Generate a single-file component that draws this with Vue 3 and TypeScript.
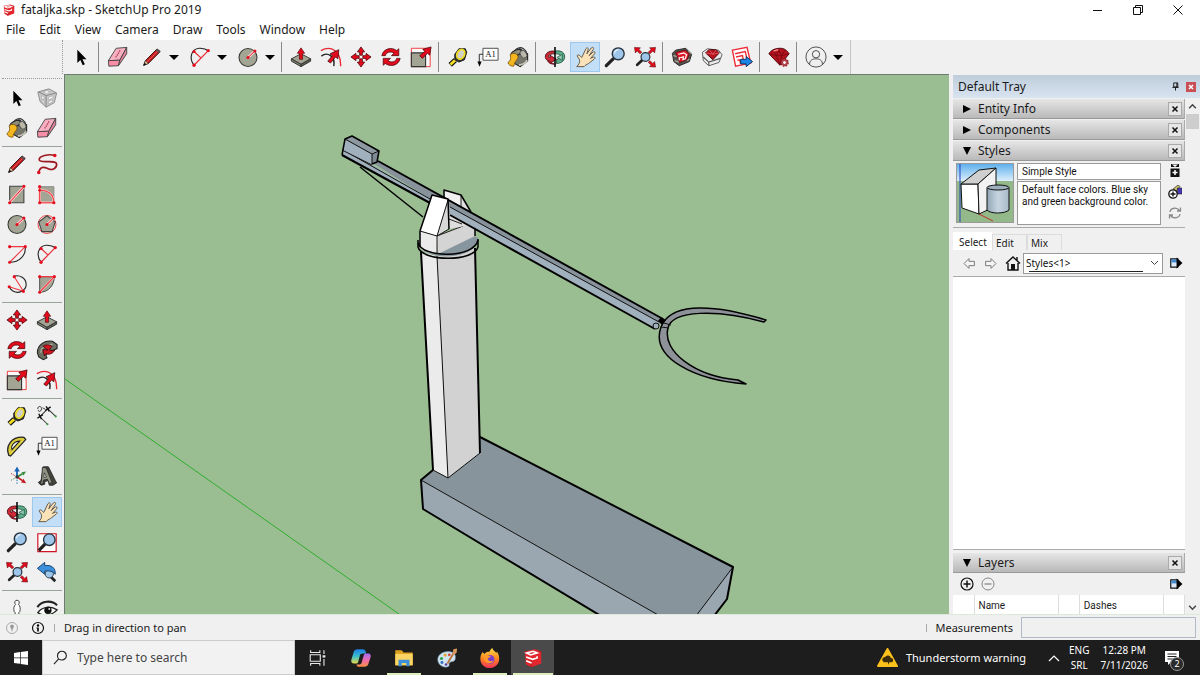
<script setup lang="ts">
import { ref } from 'vue'

interface Tool { icon: string; label: string; menu?: boolean }

const menus: string[] = ['File', 'Edit', 'View', 'Camera', 'Draw', 'Tools', 'Window', 'Help']

const toolbar: Tool[][] = [
  [{ icon: 'select', label: 'Select' }],
  [
    { icon: 'eraser', label: 'Eraser' },
    { icon: 'pencil', label: 'Line', menu: true },
    { icon: 'arc', label: '2 Point Arc', menu: true },
    { icon: 'circle', label: 'Circle', menu: true },
  ],
  [
    { icon: 'pushpull', label: 'Push/Pull' },
    { icon: 'offset', label: 'Offset' },
    { icon: 'move', label: 'Move' },
    { icon: 'rotate', label: 'Rotate' },
    { icon: 'scale', label: 'Scale' },
  ],
  [
    { icon: 'tape', label: 'Tape Measure' },
    { icon: 'text', label: 'Text' },
    { icon: 'paint', label: 'Paint Bucket' },
  ],
  [
    { icon: 'orbit', label: 'Orbit' },
    { icon: 'pan', label: 'Pan' },
    { icon: 'zoom', label: 'Zoom' },
    { icon: 'extents', label: 'Zoom Extents' },
  ],
  [
    { icon: 'warehouse', label: '3D Warehouse' },
    { icon: 'extwarehouse', label: 'Extension Warehouse' },
    { icon: 'layout', label: 'Send to LayOut' },
  ],
  [{ icon: 'extmanager', label: 'Extension Manager' }],
  [{ icon: 'user', label: 'Sign In', menu: true }],
]

const toolbox: Tool[][] = [
  [
    { icon: 'select', label: 'Select' }, { icon: 'component', label: 'Make Component' },
    { icon: 'paint', label: 'Paint Bucket' }, { icon: 'eraser', label: 'Eraser' },
  ],
  [
    { icon: 'pencil', label: 'Line' }, { icon: 'freehand', label: 'Freehand' },
    { icon: 'rect', label: 'Rectangle' }, { icon: 'rotrect', label: 'Rotated Rectangle' },
    { icon: 'circle', label: 'Circle' }, { icon: 'polygon', label: 'Polygon' },
    { icon: 'arc1', label: 'Arc' }, { icon: 'arc', label: '2 Point Arc' },
    { icon: 'arc3', label: '3 Point Arc' }, { icon: 'pie', label: 'Pie' },
  ],
  [
    { icon: 'move', label: 'Move' }, { icon: 'pushpull', label: 'Push/Pull' },
    { icon: 'rotate', label: 'Rotate' }, { icon: 'follow', label: 'Follow Me' },
    { icon: 'scale', label: 'Scale' }, { icon: 'offset', label: 'Offset' },
  ],
  [
    { icon: 'tape', label: 'Tape Measure' }, { icon: 'dimension', label: 'Dimensions' },
    { icon: 'protractor', label: 'Protractor' }, { icon: 'text', label: 'Text' },
    { icon: 'axes', label: 'Axes' }, { icon: 'text3d', label: '3D Text' },
  ],
  [
    { icon: 'orbit', label: 'Orbit' }, { icon: 'pan', label: 'Pan' },
    { icon: 'zoom', label: 'Zoom' }, { icon: 'zoomwindow', label: 'Zoom Window' },
    { icon: 'extents', label: 'Zoom Extents' }, { icon: 'previous', label: 'Previous' },
  ],
  [{ icon: 'camera', label: 'Position Camera' }, { icon: 'eye', label: 'Look Around' }],
]

const activeTool = ref('pan')
const styleName = ref('Simple Style')
const styleNote = ref('Default face colors. Blue sky and green background color.')
const tabs: string[] = ['Select', 'Edit', 'Mix']
const activeTab = ref('Select')

const apps = [
  { icon: 'taskview', label: 'Task View', open: false, active: false },
  { icon: 'copilot', label: 'Copilot', open: false, active: false },
  { icon: 'explorer', label: 'File Explorer', open: true, active: false },
  { icon: 'palette', label: 'Paint', open: false, active: false },
  { icon: 'firefox', label: 'Firefox', open: true, active: false },
  { icon: 'sketchup', label: 'SketchUp', open: true, active: true },
]
</script>

<template>
  <div class="desktop">
    <svg class="sprite" aria-hidden="true">
      <defs>
        <linearGradient id="g-fox" x1="0" y1="0" x2="0" y2="1">
          <stop offset="0" stop-color="#ffe04a" /><stop offset=".5" stop-color="#ff8a1f" /><stop offset="1" stop-color="#f0325a" />
        </linearGradient>
        <linearGradient id="g-cop1" x1="0" y1="0" x2="0" y2="1">
          <stop offset="0" stop-color="#1c7fe8" /><stop offset=".5" stop-color="#3bc0c8" /><stop offset="1" stop-color="#e8d84a" />
        </linearGradient>
        <linearGradient id="g-cop2" x1="0" y1="0" x2="0" y2="1">
          <stop offset="0" stop-color="#a06cf0" /><stop offset=".5" stop-color="#f06ab0" /><stop offset="1" stop-color="#f7903f" />
        </linearGradient>
        <linearGradient id="g-sky" x1="0" y1="0" x2="0" y2="1">
          <stop offset="0" stop-color="#5fb0ee" /><stop offset="1" stop-color="#e4f2fb" />
        </linearGradient>
        <linearGradient id="g-cyl" x1="0" y1="0" x2="1" y2="0">
          <stop offset="0" stop-color="#93a6b5" /><stop offset=".5" stop-color="#c6d4df" /><stop offset="1" stop-color="#a9bac7" />
        </linearGradient>
      </defs>

      <symbol id="i-select" viewBox="0 0 24 24">
        <path d="M8 4v14.500l3.300-3.200 2.600 5.600 2.300-1.100-2.600-5.400h4.400z" fill="#000" />
      </symbol>
      <symbol id="i-eraser" viewBox="0 0 24 24">
        <path d="M1.500 16 10 2.500 21.500 1.500 14 15.500z" fill="#f7b0c0" stroke="#444" />
        <path d="M1.500 16 14 15.500 12.500 21.500 2 22z" fill="#f78da6" stroke="#444" />
        <path d="M14 15.500 21.500 1.500v7L12.500 21.500z" fill="#e2839a" stroke="#444" />
        <path d="M9.500 12.500 14.500 4.500" stroke="#b1405e" stroke-width="1.500" stroke-dasharray="1.500 1" />
      </symbol>
      <symbol id="i-pencil" viewBox="0 0 24 24">
        <path d="M3 21 4.800 16 17.500 3.200 21 6 8 19z" fill="#c4161c" stroke="#2b1010" />
        <path d="M3 21 4.800 16 8 19z" fill="#f1cf9a" stroke="#333" stroke-width=".7" />
        <path d="M2.500 21.500 4 18.200 6 20.200z" fill="#111" />
        <path d="M17.500 3.200 21 6 19.300 7.700 15.900 4.900z" fill="#555" />
        <path d="M6.500 17.400 17.800 6" stroke="#ee6a5b" />
      </symbol>
      <symbol id="i-arc" viewBox="0 0 24 24">
        <path d="M5.500 21C-.5 13 2.500 3.500 11 2.500c4.500-.3 8 1 10.500 3" fill="none" stroke="#222" stroke-width="1.200" />
        <path d="M5.500 21 21 5M5.500 6 13 13" fill="none" stroke="#e92a34" stroke-width="1.300" />
        <g fill="#e30b1c"><circle cx="5.500" cy="21" r="1.800" /><circle cx="21" cy="5" r="1.800" /><circle cx="5.500" cy="6" r="1.700" /></g>
      </symbol>
      <symbol id="i-circle" viewBox="0 0 24 24">
        <circle cx="12" cy="12.500" r="9.800" fill="#a3a594" stroke="#3c3c38" stroke-width="1.200" />
        <path d="M12 12.500 19 6" stroke="#ffd5d5" stroke-width="3" /><path d="M12 12.500 19 6" stroke="#e30b1c" />
        <circle cx="12" cy="12.500" r="1.700" fill="#e30b1c" /><circle cx="19.500" cy="5.500" r="1.700" fill="#e30b1c" />
      </symbol>
      <symbol id="i-pushpull" viewBox="0 0 24 24">
        <path d="M1.500 14 12 8.500 22.500 14 12 20z" fill="#a3a594" stroke="#333" />
        <path d="M1.500 14v2.500L12 22.500V20z" fill="#7d7f70" stroke="#333" /><path d="M22.500 14v2.500L12 22.500V20z" fill="#5c5e52" stroke="#333" />
        <path d="M12 2 16 8h-2.300v6.500h-3.400V8H8z" fill="#e30b1c" stroke="#5a0508" stroke-width=".7" />
      </symbol>
      <symbol id="i-offset" viewBox="0 0 24 24">
        <path d="M1 5C12-1 23 5 22.500 22" fill="none" stroke="#e92a34" stroke-width="1.500" />
        <path d="M1.500 11C8 6 17 11 15 22" fill="none" stroke="#222" stroke-width="1.500" />
        <path d="M8.500 16.500 13.500 10.500 11 8.500 20.500 4 19.500 14 17 12 11.500 18.500z" fill="#e30b1c" stroke="#3a0508" stroke-width=".8" />
      </symbol>
      <symbol id="i-move" viewBox="0 0 24 24">
        <g fill="#e30b1c" stroke="#45060a" stroke-width=".8">
          <path d="M12 1 16 6.500h-2.500V10h-3V6.500H8z" /><path d="M12 23 8 17.500h2.500V14h3v3.500H16z" />
          <path d="M1 12 6.500 8v2.500H10v3H6.500V16z" /><path d="M23 12 17.500 16v-2.500H14v-3h3.500V8z" />
        </g>
      </symbol>
      <symbol id="i-rotate" viewBox="0 0 24 24">
        <g fill="#e30b1c" stroke="#45060a" stroke-width=".8">
          <path d="M2 10.500C3.500 2.500 13 .8 18.200 5L20.500 3v7.500h-8l2.800-2.700C11.500 5.500 7 6.500 5.800 10.500z" />
          <path d="M22 13.500c-1.500 8-11 9.700-16.200 5.500L3.500 21v-7.500h8l-2.800 2.700c3.800 2.300 8.300 1.300 9.500-2.700z" />
        </g>
      </symbol>
      <symbol id="i-scale" viewBox="0 0 24 24">
        <path d="M1.500 2.500H22v20H1.500z" fill="#fff" fill-opacity=".6" stroke="#e33" /><path d="M1.500 7.500h15.500v15H1.500z" fill="#a3a594" stroke="#333" stroke-width="1.200" />
        <path d="M10.500 10.500 16 6 14 3.500 23 1 21.500 10 19 8 13.500 13.500z" fill="#e30b1c" stroke="#45060a" stroke-width=".8" />
      </symbol>
      <symbol id="i-tape" viewBox="0 0 24 24">
        <path d="M9 15.500 3.500 20.500" stroke="#111" stroke-width="5.500" /><path d="M9.500 15 3.800 20.200" stroke="#f4df20" stroke-width="3" />
        <path d="M8.500 9 13 3h7l1.500 4-2.500 8-6 2.500-4.500-2.500z" fill="#333" stroke="#111" />
        <ellipse cx="15" cy="9" rx="4" ry="5.500" transform="rotate(28 15 9)" fill="#cfd0c8" stroke="#eedb22" stroke-width="2" />
      </symbol>
      <symbol id="i-text" viewBox="0 0 24 24">
        <path d="M6.500 2.500h16.500v13H6.500z" fill="#fff" stroke="#444" />
        <text x="9" y="12.300" font-family="Liberation Serif, serif" font-size="9.500" fill="#111">A1</text>
        <path d="M6.500 9H2.500v9" fill="none" stroke="#222" /><path d="M0.500 17h4.500l-2.300 5.500z" fill="#000" />
      </symbol>
      <symbol id="i-paint" viewBox="0 0 24 24">
        <path d="M5 10 14 3l8.500 5.500v7.500l-8 6.500-7.500-4z" fill="#74756b" stroke="#222" stroke-width="1.200" />
        <path d="M7.500 10C6 5 13-.5 18 3c4.500 3.500 4 7 2 9" fill="none" stroke="#333" stroke-width="1.200" />
        <ellipse cx="10" cy="7.500" rx="6" ry="3" transform="rotate(-25 10 7.500)" fill="#8e8c7c" stroke="#222" stroke-width="1.200" />
        <ellipse cx="18" cy="9" rx="3.200" ry="4.500" transform="rotate(-35 18 9)" fill="#b9b8aa" stroke="#444" stroke-width=".8" />
        <path d="M13 20.500c4 .5 8-3 9-5" fill="none" stroke="#c9c8ba" stroke-width="1.800" />
        <path d="M3.500 9.500C7 6.500 12.500 8.500 12 12.500c-1 3.500-3.500 3.500-4.500 9.500-3 .5-6-1.500-6.500-4 3-2 3.500-4 2.500-8.500z" fill="#f4b61e" stroke="#6d4a06" stroke-width=".8" />
      </symbol>
      <symbol id="i-orbit" viewBox="0 0 24 24">
        <path d="M12.500 5.500C19 4.500 23 7.500 22.500 12.500c-.5 4-4 6.500-9 6.500v-3.500c-1-.8 2.500-.5 5-4-1-2.500-3-3-6-3z" fill="#5fae8b" stroke="#184a36" stroke-width=".9" />
        <path d="M14 12.500 20 9v6.500z" fill="#8fc8ae" stroke="#184a36" stroke-width=".7" />
        <path d="M11.500 5.500C5 5 1 8 1.500 12.500c0 2 2 3.500 5 4V19l7-4.500-7-4.500v2.500C5 12.300 4.500 11.500 5 10.500c1-1.500 3-2 6.500-2z" fill="#cf2a38" stroke="#40060a" stroke-width=".9" />
        <path d="M4 16c2 3 5 4 9 3.500" fill="none" stroke="#7c1520" stroke-width="1.500" />
        <path d="M12 1v22" stroke="#111" stroke-width="1.800" />
      </symbol>
      <symbol id="i-pan" viewBox="0 0 24 24">
        <path d="M3 22.500c2.500-2.500 3.500-4.500 3-7.500L3.500 11c0-2 2.300-1.500 3.500.3l1.500 1.200L13 3c1-1.700 3-1 2.500.8L14 8.500l5-6.500c1.500-1.200 3.200 0 2 1.700L16.500 10.500l4.500-4c1.600-.9 2.600.8 1.500 2L18 13.500l3.500-1.500c1.500-.3 2 1.300.6 2.200L16 19c-2.500 1.500-4 2-5 3.500z" fill="#fbe3b9" stroke="#5c5142" stroke-width="1" />
      </symbol>
      <symbol id="i-zoom" viewBox="0 0 24 24">
        <path d="M2.500 21.500 10 14" stroke="#222" stroke-width="3.500" stroke-linecap="round" />
        <circle cx="15.500" cy="8.500" r="6.500" fill="#9ec5ea" stroke="#26323d" stroke-width="1.500" />
        <path d="M11.500 8c0-2 2-4 4.500-4" fill="none" stroke="#e2f0fb" stroke-width="1.500" />
      </symbol>
      <symbol id="i-extents" viewBox="0 0 24 24">
        <path d="M3.500 20.500 10 14.500" stroke="#222" stroke-width="3" stroke-linecap="round" /><circle cx="12.500" cy="12" r="4.800" fill="#9ec5ea" stroke="#26323d" stroke-width="1.300" />
        <g fill="#e30b1c" stroke="#55060a" stroke-width=".6">
          <path d="M.5 1.500 7 2 5.300 3.700 8.500 6.700 6.500 8.500 3.500 5.500 1.500 7.500z" /><path d="M23.500 1.500 17 2l1.700 1.700-3.200 3 2 1.800 3-3 2 2z" />
          <path d="M23.500 23 17 22.500l1.700-1.700-3.200-3 2-1.800 3 3 2-2z" />
        </g>
      </symbol>
      <symbol id="i-component" viewBox="0 0 24 24">
        <path d="M2 5.500 14 2l8.500 4.500L20 17l-9 5-6.500-6z" fill="#c9c9c9" stroke="#888" />
        <path d="M3 5.500 11 9.500 21.500 6.500M11 9.500V21.500" fill="none" stroke="#8a8a8a" stroke-width="1.200" />
        <path d="M6 9.500l3 1.700v2.500l-3-1.700zM6.500 14l2.500 1.700v2.500l-2.500-2.500zM13.500 11.500l5-2v2.500l-5 2zM13.500 16l4.500-2v2l-4.500 2.500zM8 5.500l4-1.500 3.500 2-4 1z" fill="#fff" stroke="#999" stroke-width=".6" />
      </symbol>
      <symbol id="i-freehand" viewBox="0 0 24 24">
        <path d="M20 2.500C14 1 3 3 3.500 7.500S22 6.500 22.500 12c.3 5-5 7-8.500 5.500S5 13 3 21" fill="none" stroke="#9d1820" stroke-width="1.800" />
        <circle cx="20.500" cy="2.800" r="1.900" fill="#e30b1c" /><circle cx="3" cy="21.300" r="1.900" fill="#e30b1c" />
      </symbol>
      <symbol id="i-rect" viewBox="0 0 24 24">
        <path d="M4 3.500h15.500v18H4z" fill="#a3a594" stroke="#444" stroke-width="1.200" /><path d="M4 21 19.500 4" stroke="#ffc6c6" stroke-width="3" /><path d="M4 21 19.500 4" stroke="#e30b1c" />
        <circle cx="4" cy="21.500" r="1.700" fill="#e30b1c" /><circle cx="19.500" cy="3.500" r="1.700" fill="#e30b1c" />
      </symbol>
      <symbol id="i-rotrect" viewBox="0 0 24 24">
        <path d="M4 4h15.500v17.500H4z" fill="#a3a594" stroke="#888" /><path d="M4 21.500V4M4 8c8-1 15.500 4 15.500 13.500H4" fill="none" stroke="#ffc6c6" stroke-width="2.500" /><path d="M4 21.500V4M4 8c8-1 15.500 4 15.500 13.500H4" fill="none" stroke="#ee3a42" stroke-width="1.200" />
        <g fill="#e30b1c"><circle cx="4" cy="4" r="1.700" /><circle cx="4" cy="8" r="1.500" /><circle cx="4" cy="21.500" r="1.700" /><circle cx="19.500" cy="21.500" r="1.700" /></g>
      </symbol>
      <symbol id="i-polygon" viewBox="0 0 24 24">
        <circle cx="12" cy="12.500" r="9.800" fill="none" stroke="#e33" /><path d="M12 3 21 9.800 17.600 20.300H6.400L3 9.800z" fill="#a3a594" stroke="#444" stroke-width="1.200" />
        <path d="M12 12.500 19 6" stroke="#ffd5d5" stroke-width="3" /><path d="M12 12.500 19 6" stroke="#e30b1c" />
        <circle cx="12" cy="12.500" r="1.700" fill="#e30b1c" /><circle cx="19.500" cy="5.500" r="1.700" fill="#e30b1c" />
      </symbol>
      <symbol id="i-arc1" viewBox="0 0 24 24">
        <path d="M21 4c1 9-6 17-17 17" fill="none" stroke="#222" stroke-width="1.200" /><path d="M4 4h17L4 21" fill="none" stroke="#ee3a42" stroke-width="1.200" />
        <g fill="#e30b1c"><circle cx="4" cy="4" r="1.700" /><circle cx="21" cy="4" r="1.700" /><circle cx="4" cy="21" r="1.700" /></g>
      </symbol>
      <symbol id="i-arc3" viewBox="0 0 24 24">
        <path d="M8 4c7-3 14 2 14 8.500S14 23 8 20c-3-1.500-4-4-4.500-5" fill="none" stroke="#222" stroke-width="1.200" /><path d="M9 4 19 20 3.500 15" fill="none" stroke="#ee3a42" stroke-width="1.200" />
        <g fill="#e30b1c"><circle cx="9" cy="4" r="1.700" /><circle cx="19" cy="20" r="1.700" /><circle cx="3.500" cy="15" r="1.700" /></g>
      </symbol>
      <symbol id="i-pie" viewBox="0 0 24 24">
        <path d="M4 4h16c0 9-6 17-16 17z" fill="#a3a594" stroke="#444" /><path d="M20 4 4 21" stroke="#ffc6c6" stroke-width="2.500" /><path d="M4 4h16L4 21" fill="none" stroke="#ee3a42" stroke-width="1.200" />
        <g fill="#e30b1c"><circle cx="4" cy="4" r="1.700" /><circle cx="20" cy="4" r="1.700" /><circle cx="4" cy="21" r="1.700" /></g>
      </symbol>
      <symbol id="i-follow" viewBox="0 0 24 24">
        <path d="M1.500 15C1.500 6 10 1 18 2.500L23 6v4.500l-5 2c-5-1-7 2-7 6l1 2-4 2-5-3z" fill="#6e7064" stroke="#222" stroke-width="1.200" />
        <path d="M5 15c1-6 6-9.500 13-9" fill="none" stroke="#a9ab9b" stroke-width="1.500" />
        <path d="M7.500 8C11 5.500 15 6 17.500 8l-3 4c2 1 4 .8 6 0-2 4.500-7 5.500-9.500 4L9 18.500 7.500 11.500 13 12z" fill="#d01420" stroke="#3a0508" stroke-width=".8" />
      </symbol>
      <symbol id="i-dimension" viewBox="0 0 24 24">
        <path d="M4 13 13 4M3.500 12l9 9M12 3.500l9.500 9" stroke="#333" stroke-width="1.100" />
        <path d="M1.500 14.500l6-4M10 6l6-4M3 9.500l3 6M11 1.500l3.500 5.500" stroke="#111" stroke-width="1.500" />
        <path d="M2 4.500C1.500 1 6 .5 6 4S2.500 8 2.500 5.500M7 3l3 1.500" fill="none" stroke="#333" />
        <circle cx="12.500" cy="21" r="1.200" fill="#3c9a42" /><circle cx="21.500" cy="12.500" r="1.200" fill="#3c9a42" />
      </symbol>
      <symbol id="i-protractor" viewBox="0 0 24 24">
        <path d="M3 22C-1 12 6 1.500 19.500 2.500l2 2.500L5 23z" fill="#d9c838" stroke="#222" stroke-width="1.400" />
        <path d="M6.500 16C5 11.500 9 6.500 15 6.500z" fill="#f0f0f0" stroke="#222" stroke-width="1.100" /><path d="M5 20 19.500 5" stroke="#fff59a" stroke-dasharray="1 1.500" />
      </symbol>
      <symbol id="i-axes" viewBox="0 0 24 24">
        <path d="M12 13V5" stroke="#1762b4" stroke-width="2" /><path d="M12 1.500 15 7H9z" fill="#1762b4" />
        <path d="M12 13l6-3.500" stroke="#348c3c" stroke-width="1.800" /><path d="M22 7l-3 4.500-2-3.500z" fill="#348c3c" />
        <path d="M12 13l6 4" stroke="#c41620" stroke-width="1.800" /><path d="M22 20l-5.500-1 2.500-4z" fill="#c41620" />
        <path d="M12 13v8" stroke="#1762b4" stroke-dasharray="1.500 1.500" /><path d="M12 13l-7-4" stroke="#c41620" stroke-dasharray="1.500 1.500" /><path d="M12 13l-7 4" stroke="#348c3c" stroke-dasharray="1.500 1.500" />
        <circle cx="12" cy="13" r="1.800" fill="#333" />
      </symbol>
      <symbol id="i-text3d" viewBox="0 0 24 24">
        <path d="M8 2h5.500l7.500 15 1.500 2.500-4 2.500h-4l-1-5-4 1v3l-4 1-3-3 3-2z" fill="#44463d" stroke="#222" />
        <path d="M7 2.500l4 .5L17.500 19l-3 1.500-2-5L8 16.500l-.5 4-3 .5L6 17z" fill="#8f9182" stroke="#222" stroke-width=".8" /><path d="M9 8.500l2.500 4.500-3 .5z" fill="#f0f0f0" stroke="#222" stroke-width=".8" />
      </symbol>
      <symbol id="i-zoomwindow" viewBox="0 0 24 24">
        <path d="M2 3h20v19.500H2z" fill="#fff" stroke="#d01425" stroke-width="1.300" /><path d="M3 21.500 10 14" stroke="#222" stroke-width="3.500" />
        <circle cx="14.500" cy="9.500" r="6.300" fill="#9ec5ea" stroke="#26323d" stroke-width="1.500" />
      </symbol>
      <symbol id="i-previous" viewBox="0 0 24 24">
        <path d="M14 15 21 22" stroke="#222" stroke-width="3" /><circle cx="14.500" cy="14" r="4.500" fill="#9ec5ea" stroke="#26323d" />
        <path d="M1.500 8 9.500 1.500V5c7-1 12 2 11.500 9.500-2.500-3.500-6-4-11.500-3.500V14.500z" fill="#3d8fdb" stroke="#123d68" />
      </symbol>
      <symbol id="i-camera" viewBox="0 0 24 24">
        <path d="M12 3.500a2.500 2.500 0 0 1 1.500 4.500c2 1.500 2.500 5 1.500 8l-1 1v6h-4v-6l-1-1c-1-3-.5-6.500 1.500-8A2.500 2.500 0 0 1 12 3.500z" fill="#fff" stroke="#333" />
      </symbol>
      <symbol id="i-eye" viewBox="0 0 24 24">
        <path d="M1.500 11C6 4 17 3 23 9" fill="none" stroke="#222" stroke-width="2.200" /><path d="M2 17c5-6.500 14-7.500 21-3-4 5-15 8-21 3z" fill="#fff" stroke="#222" stroke-width="1.500" /><circle cx="13" cy="14.500" r="4" fill="#111" /><circle cx="14.500" cy="13" r="1" fill="#fff" />
      </symbol>
      <symbol id="i-warehouse" viewBox="0 0 24 24">
        <path d="M1.500 8 5 4.500l11-2L22.500 9 20 17 9 21.500 3 17z" fill="#55524e" stroke="#222" />
        <path d="M2.500 10.500l4 1M19 5.500l3.500 3M4 16l5 1.500M20 14.500l-3 1.500" stroke="#aaa69f" stroke-width="1.500" />
        <path d="M5 7 15.500 4.500 20 8.500 17.500 15 9.500 18z" fill="#da1a28" stroke="#57090f" stroke-width=".8" />
        <path d="M8 9l6-1.500 3 2-1.500 4.500-2.500.8.500-3-3.500 1M9 12v3.500" fill="none" stroke="#fff" stroke-width="1.300" />
      </symbol>
      <symbol id="i-extwarehouse" viewBox="0 0 24 24">
        <path d="M1.500 7 7 3l12 1.500 4 5L19.500 18 8.500 21.500 2.500 16z" fill="#ececec" stroke="#555" />
        <path d="M2.500 12l6 5.500L21 13.500M8.500 17.500v4" fill="none" stroke="#555" stroke-width="1.200" />
        <path d="M5 7.500 8.500 4h8L20 7.500 13 15z" fill="#b5131f" stroke="#3a0508" stroke-width=".9" /><path d="M5 7.500l8 1.500 7-1.500M9 4l4 5 3.500-5" fill="none" stroke="#ee6d70" stroke-width=".7" />
      </symbol>
      <symbol id="i-layout" viewBox="0 0 24 24">
        <path d="M1.500 4.500 17.500 1.500l4 17L5 22z" fill="#fff" stroke="#ee2b36" stroke-width="1.500" /><path d="M4.500 8.500 15.500 6l2 8M5.500 12l7-1.500 1 5M7 15.500l2.500-.5 1 4.500" fill="none" stroke="#ee2b36" stroke-width="1.500" />
        <path d="M10.500 14.500h6V11.500l7 5.500-7 5.500v-3h-6z" fill="#1986e8" stroke="#0b3058" />
      </symbol>
      <symbol id="i-extmanager" viewBox="0 0 24 24">
        <path d="M1 8.500C3 5 6 3 12 2.500S21 5 23 8.500L13 21z" fill="#b3121d" stroke="#4a060a" /><path d="M1.500 8.500 9 10.500l6 0 8-2M6 4.500 9 10.500l4 10L15 10.500l3.500-6M9 10.500 12 5l3 5.500" fill="none" stroke="#740a12" stroke-width=".9" /><path d="M6 5.500l5-1.500" stroke="#ff8b8e" stroke-width="1.500" />
        <circle cx="18" cy="18" r="3.800" fill="#b5454c" /><circle cx="18" cy="18" r="1.500" fill="#fff" /><circle cx="18" cy="18" r="4" fill="none" stroke="#8f1c25" stroke-width="1.500" stroke-dasharray="1.800 1.300" />
      </symbol>
      <symbol id="i-user" viewBox="0 0 24 24">
        <g fill="none" stroke="#444"><circle cx="12" cy="12" r="11" /><circle cx="12" cy="9" r="4" /><path d="M5 20c0-4.500 3-6 7-6s7 1.500 7 6" /></g>
      </symbol>
      <symbol id="i-sketchup" viewBox="0 0 24 24">
        <path d="M3 5 14 2.500 21 5v13L10 22l-6-3.500 0-4z" fill="#e3262d" /><path d="M3 5l7 2.500L21 5M10 22v-9" fill="none" stroke="#a9141c" />
        <path d="M5 6.500l7-1.800 4.500 1.800-7 2zM4.500 11l7 2.500 5-1.500v-2M4.500 15l6 2.500" fill="none" stroke="#fff" stroke-width="1.800" />
      </symbol>
      <symbol id="i-taskview" viewBox="0 0 24 24">
        <path d="M4 3.500v2.500h10V3.500M4 20.500V18h10v2.500M3.500 8.500h11v7h-11zM18.500 3.500v4M18.500 13v7.500" fill="none" stroke="#e8e8e8" stroke-width="1.200" /><path d="M17 9h3v2.500h-3z" fill="#e8e8e8" />
      </symbol>
      <symbol id="i-copilot" viewBox="0 0 24 24">
        <path d="M8 2.500h6c2 0 2.500 1 3 2.500l.5 2-4 0c-2 0-2.500 1-3 3l-1.500 6c-.5 1.500-1 2-3 2H4c-2.500 0-3-2-2.500-4L4 5.500C4.700 3.500 6 2.500 8 2.500z" fill="url(#g-cop1)" />
        <path d="M16 21.500h-6c-2 0-2.500-1-3-2.500h3c2 0 2.500-1 3-3l2-7c.5-1.500 1-2 3-2h2c2.500 0 3 2 2.500 4L20 18.500c-.7 2-2 3-4 3z" fill="url(#g-cop2)" />
      </symbol>
      <symbol id="i-explorer" viewBox="0 0 24 24">
        <path d="M2.500 3.500h7l2 2.500h10v14h-19z" fill="#e0a11e" /><path d="M2.500 7.500h19v12.500h-19z" fill="#fcd463" /><path d="M6 21v-7h12v7h-3.500v-3.500h-5V21z" fill="#3c8fd8" />
      </symbol>
      <symbol id="i-palette" viewBox="0 0 24 24">
        <path d="M2 15C1 9 7 4.500 14 5c6 .5 8 4 7 8s-4 2-6 4 1 3-2 4.500S3 21 2 15z" fill="#cfe3f1" stroke="#6e93ad" stroke-width=".6" />
        <circle cx="6" cy="12.500" r="1.700" fill="#31a04a" /><circle cx="10" cy="8.800" r="1.700" fill="#e8a42c" /><circle cx="14.500" cy="8.500" r="1.500" fill="#d4453a" /><circle cx="6.500" cy="17" r="1.600" fill="#2f6fc0" /><circle cx="11" cy="19" r="1.400" fill="#5e3b9a" />
        <path d="M12.500 18 19 7" stroke="#b8763b" stroke-width="2" /><path d="M18 7.500l1-5 4-1-.5 4.500-3 3z" fill="#d69a5e" />
      </symbol>
      <symbol id="i-firefox" viewBox="0 0 24 24">
        <path d="M4 5.500c.5 1 1 1.500 2 2C8 5 10 5 11.500 5.200 12 3.500 13 2 14.500 1c.5 2.500 3 3.500 4.500 5.500l.5-1.500c2.500 3.500 3.500 8.500 1.500 12.500C19 21 15.500 23 12 23 5.500 23 1.500 18 1.500 13c0-3 1-5.500 2.500-7.500z" fill="url(#g-fox)" />
        <circle cx="12" cy="13.500" r="4.800" fill="#7a3fd0" /><path d="M5.500 10c3-2 6-1 8 1-2-.2-2.500 1-4 1.500 0 3 4 4 6.500 2-1 4-8 5-10.500-.5z" fill="#ff9a28" />
      </symbol>
      <symbol id="i-details" viewBox="0 0 24 24">
        <path d="M3 5h12v14H3z" fill="#dbe9f7" stroke="#111" stroke-width="2" /><path d="M4 6h10v5H4z" fill="#4389d0" /><path d="M13 2.500 23 12 13 21.500z" fill="#000" />
      </symbol>
      <symbol id="i-arrow" viewBox="0 0 24 24">
        <path d="M2 12 11 3v5h10v8H11v5z" fill="#f5f5f5" stroke="#777" stroke-width="1.800" />
      </symbol>
    </svg>

    <header class="titlebar">
      <svg class="logo" aria-hidden="true"><use href="#i-sketchup" /></svg>
      <h1>fataljka.skp - SketchUp Pro 2019</h1>
      <div class="window-buttons">
        <button type="button" aria-label="Minimize"><svg viewBox="0 0 12 12"><path d="M1 6.500h9" /></svg></button>
        <button type="button" aria-label="Restore"><svg viewBox="0 0 12 12"><path d="M1.500 3.500h7v7h-7zM3.500 3.500v-2h7v7h-2" /></svg></button>
        <button type="button" aria-label="Close"><svg viewBox="0 0 12 12"><path d="M1.500 1.500l9 9M10.500 1.500l-9 9" /></svg></button>
      </div>
    </header>

    <nav class="menubar">
      <button v-for="m in menus" :key="m" type="button">{{ m }}</button>
    </nav>

    <div class="toolbar" role="toolbar" aria-label="Getting Started">
      <div class="strip">
        <div v-for="(group, i) in toolbar" :key="i" class="group">
          <div v-for="t in group" :key="t.icon" class="slot" :class="{ pair: t.menu }">
            <button type="button" class="tool" :class="{ on: t.icon === activeTool }" :aria-label="t.label" @click="activeTool = t.icon">
              <svg aria-hidden="true"><use :href="'#i-' + t.icon" /></svg>
            </button>
            <button v-if="t.menu" type="button" class="caret" :aria-label="t.label + ' options'"></button>
          </div>
        </div>
      </div>
    </div>

    <div class="workspace">
      <div class="toolbox" role="toolbar" aria-label="Large Tool Set">
        <div v-for="(group, i) in toolbox" :key="i" class="box-group">
          <button v-for="t in group" :key="t.icon" type="button" class="tool" :class="{ on: t.icon === activeTool }" :aria-label="t.label" @click="activeTool = t.icon">
            <svg aria-hidden="true"><use :href="'#i-' + t.icon" /></svg>
          </button>
        </div>
      </div>

      <main class="viewport">
        <svg viewBox="65 75 884 539" preserveAspectRatio="xMinYMin slice" role="img" aria-label="3D model">
          <path d="M65 379 399 614" stroke="#2fae2f" />
          <g stroke-linejoin="round">
            <!-- base slab -->
            <path d="M433 470 480 437 733 567 697 616H660L421 480z" fill="#87949c" />
            <path d="M421 480 660 616H601L423 509z" fill="#9aa7b1" />
            <path d="M733 567 727 599 714 616H696z" fill="#9aa7b1" />
            <path d="M421 480 660 616M733 567 696 616" fill="none" stroke="#111" />
            <path d="M601 616 423 509 421 480 433 470M480 437 733 567 727 599 714 616" fill="none" stroke="#000" stroke-width="2" />
            <!-- column -->
            <path d="M421 252 437 256 448 478 433 470z" fill="#ebebeb" />
            <path d="M437 256 475 246 480 453 448 478z" fill="#d2d2d2" />
            <path d="M437 256 448 478M433 470 448 478 480 453" fill="none" stroke="#111" />
            <path d="M421 252 433 470M475 248 480 453" fill="none" stroke="#000" stroke-width="2" />
            <!-- collar -->
            <path d="M418 241C417 262 478 262 478 238L474 236 437 253z" fill="#87959e" />
            <path d="M420 231 437 236V254C430 254 423 251 420 248z" fill="#ebebeb" />
            <path d="M437 236 475 221V236L438 254z" fill="#d4d4d4" />
            <path d="M418 240v7c4 15 56 15 60 0v-8" fill="none" stroke="#000" stroke-width="1.500" />
            <path d="M418 243c4 15 56 16 60-3" fill="none" stroke="#000" stroke-width="1.500" />
            <path d="M420 231V247M475 222V236" fill="none" stroke="#000" stroke-width="1.500" /><path d="M437 236V254M437 236 463 226" stroke="#222" />
            <!-- rear bracket -->
            <path d="M444 190 461 195 471 212 475 224 449 229z" fill="#dedede" /><path d="M444 190 461 195V211L445 200z" fill="#f1f1f1" />
            <path d="M461 195V212M449 219 462 224M461 208 472 213" fill="none" stroke="#222" />
            <path d="M444 199V190L461 195 471 212" fill="none" stroke="#000" stroke-width="1.500" />
            <!-- beam -->
            <path d="M373 163 378 161 663 319 659 325 430 199z" fill="#87929a" />
            <path d="M342 155 346 150 373 165 430 199 450 207 659 322 655 329 430 203z" fill="#a1b0bd" />
            <path d="M345 151 430 199M450 207 659 322" stroke="#111" />
            <path d="M378 161 663 319M342 155 430 203M450 215 655 329" stroke="#000" stroke-width="2" />
            <path d="M360 167 423 217" stroke="#000" stroke-width="1.500" />
            <!-- counterweight -->
            <path d="M345 139 352 136 379 151 372 155z" fill="#8d98a0" /><path d="M345 139 372 154V164L342 151z" fill="#a1b0bd" /><path d="M372 154 379 151 377 162 372 164z" fill="#7f8a92" />
            <path d="M345 139 372 154V164M372 154 379 151M342 150 372 165" fill="none" stroke="#111" />
            <path d="M342 155 345 139 352 136 379 151 377 162 372 164" fill="none" stroke="#000" stroke-width="1.500" />
            <!-- front bracket -->
            <path d="M432 195 448 199 437 236 420 231z" fill="#fff" /><path d="M448 199 449 229 437 236z" fill="#d8d8d8" />
            <path d="M420 231 437 236 448 200M437 236 449 229" fill="none" stroke="#111" />
            <path d="M420 231 432 195 448 199 449 229" fill="none" stroke="#000" stroke-width="1.500" />
            <!-- fork -->
            <path d="M663 323C675 303 714 304 766 320L764 322C717 309 672 310 668 328 662 351 694 376 738 380L746 384C695 380 650 358 661 327z" fill="#8c9297" stroke="#000" stroke-width="1.500" />
            <path d="M661 327 669 328M664 323 671 325" stroke="#111" />
            <ellipse cx="656" cy="326" rx="3" ry="3" fill="#a1b0bd" stroke="#111" /><path d="M658 321 661 317 666 320 662 325z" fill="#000" />
          </g>
        </svg>
      </main>

      <aside class="tray">
        <div class="tray-head">
          <h2>Default Tray</h2>
          <button type="button" class="pin" aria-label="Pin"><svg viewBox="0 0 10 10"><path d="M3 1h4.500v4.500H3zM1.500 6h7M5 6v3.500M6.500 1v5" fill="none" stroke="#111" /></svg></button>
          <button type="button" class="tray-close" aria-label="Close tray"><svg viewBox="0 0 8 8"><path d="M2 2l4 4M6 2 2 6" stroke="#fff" stroke-width="1.500" /></svg></button>
        </div>
        <div class="tray-body">
          <div class="panels">
            <section v-for="p in ['Entity Info', 'Components']" :key="p" class="panel-head">
              <svg class="tri" viewBox="0 0 8 8"><path d="M0 0v8l8-4z" /></svg>
              <h3>{{ p }}</h3>
              <button type="button" class="x" :aria-label="'Close ' + p"><svg viewBox="0 0 8 8"><path d="M1.500 1.500l5 5M6.500 1.500l-5 5" /></svg></button>
            </section>
            <div class="panel-head">
              <svg class="tri" viewBox="0 0 8 8"><path d="M0 0h8L4 8z" /></svg>
              <h3>Styles</h3>
              <button type="button" class="x" aria-label="Close Styles"><svg viewBox="0 0 8 8"><path d="M1.500 1.500l5 5M6.500 1.500l-5 5" /></svg></button>
            </div>

            <div class="style-info">
              <svg class="thumb" viewBox="0 0 56 58" role="img" aria-label="Style preview">
                <path d="M0 0h56v18H0z" fill="url(#g-sky)" /><path d="M0 17h56v41H0z" fill="#93b98a" />
                <path d="M3 0v58" stroke="#2440c0" /><path d="M20 49 36 57" stroke="#c03020" />
                <path d="M4 20 21 20 22 50 5 44z" fill="#fff" stroke="#111" /><path d="M4 20 22 6 39 4 21 20z" fill="#cfcfcf" stroke="#111" /><path d="M21 20 39 4V42L22 50z" fill="#f2f2f2" stroke="#111" />
                <path d="M30 24v22c3 4 18 4 22 0V24z" fill="url(#g-cyl)" stroke="#111" /><ellipse cx="41" cy="23.500" rx="11" ry="2.500" fill="#9dafbd" stroke="#111" />
              </svg>
              <div class="style-fields">
                <input v-model="styleName" type="text" aria-label="Style name" />
                <textarea v-model="styleNote" aria-label="Style description"></textarea>
              </div>
              <div class="style-actions">
                <button type="button" aria-label="Show secondary pane"><svg viewBox="0 0 14 14"><path d="M3 0h8v3H3z" fill="#111" /><path d="M4 .5h6L7 3z" fill="#fff" /><path d="M2.500 4.500h9V13h-9z" fill="#111" /><path d="M7 6v5M4.500 8.500h5" stroke="#fff" stroke-width="1.500" /></svg></button>
                <button type="button" aria-label="Create new style"><svg viewBox="0 0 14 14"><path d="M5 4 10 0l2 1.500L8 6z" fill="#c9bf6a" stroke="#444" stroke-width=".8" /><path d="M9.500 3H14v6H9.500z" fill="#4737b8" stroke="#222" stroke-width=".6" /><circle cx="5" cy="9" r="4.200" fill="#fff" stroke="#111" stroke-width="1.300" /><path d="M5 6.500v5M2.500 9h5" stroke="#111" stroke-width="1.300" /></svg></button>
                <button type="button" aria-label="Update style"><svg viewBox="0 0 14 14"><path d="M2 6c.8-4.500 7-5 9.500-1.500M12 8c-.8 4.500-7 5-9.500 1.500M12.500 1.500v3.500H9M1.500 12.500V9H5" fill="none" stroke="#8a8a8a" stroke-width="1.300" /></svg></button>
              </div>
            </div>

            <div class="tabs" role="tablist">
              <button v-for="t in tabs" :key="t" type="button" role="tab" :aria-selected="t === activeTab" :class="{ current: t === activeTab }" @click="activeTab = t">{{ t }}</button>
            </div>

            <div class="collection">
              <button type="button" aria-label="Back"><svg><use href="#i-arrow" /></svg></button>
              <button type="button" aria-label="Forward"><svg class="flip"><use href="#i-arrow" /></svg></button>
              <button type="button" class="home" aria-label="In Model"><svg viewBox="0 0 16 16"><path d="M3 8v7h10V8M1 8.500 8 2l7 6.500M12 5.500V2" fill="none" stroke="#111" stroke-width="1.400" /><path d="M6 9h4v6H6z" fill="#111" /></svg></button>
              <select aria-label="Style collection"><option>Styles&lt;1&gt;</option></select>
              <button type="button" class="more" aria-label="Details"><svg><use href="#i-details" /></svg></button>
            </div>

            <div class="style-list"></div>

            <div class="panel-head">
              <svg class="tri" viewBox="0 0 8 8"><path d="M0 0h8L4 8z" /></svg>
              <h3>Layers</h3>
              <button type="button" class="x" aria-label="Close Layers"><svg viewBox="0 0 8 8"><path d="M1.500 1.500l5 5M6.500 1.500l-5 5" /></svg></button>
            </div>
            <div class="layer-tools">
              <button type="button" aria-label="Add layer"><svg viewBox="0 0 14 14"><circle cx="7" cy="7" r="6" fill="none" stroke="#111" stroke-width="1.200" /><path d="M7 3.500v7M3.500 7h7" stroke="#111" stroke-width="1.500" /></svg></button>
              <button type="button" aria-label="Delete layer"><svg viewBox="0 0 14 14"><circle cx="7" cy="7" r="6" fill="none" stroke="#888" /><path d="M3.500 7h7" stroke="#888" stroke-width="1.300" /></svg></button>
              <button type="button" class="more" aria-label="Details"><svg><use href="#i-details" /></svg></button>
            </div>
            <table class="layers">
              <thead><tr><th class="narrow"></th><th class="wide">Name</th><th class="narrow"></th><th class="wide">Dashes</th><th class="narrow"></th></tr></thead>
            </table>
          </div>
          <div class="scroll">
            <svg viewBox="0 0 8 8"><path d="M1 5.500 4 2.500l3 3" /></svg>
            <div class="thumb-bar"></div>
            <svg viewBox="0 0 8 8"><path d="M1 2.500l3 3 3-3" /></svg>
          </div>
        </div>
      </aside>
    </div>

    <footer class="status">
      <svg viewBox="0 0 14 14"><circle cx="7" cy="7" r="5.500" fill="none" stroke="#aaa" /><path d="M7 3.500a2 2 0 0 1 1 3.700L7 11 6 7.200a2 2 0 0 1 1-3.700z" fill="#999" /></svg>
      <svg viewBox="0 0 14 14"><circle cx="7" cy="7" r="5.500" fill="none" stroke="#111" stroke-width="1.200" /><circle cx="7" cy="4.500" r="1.200" /><path d="M5.500 6.500h2.300v4h-1.600v-3h-.7z" /></svg>
      <span class="tick"></span>
      <span class="hint">Drag in direction to pan</span>
      <span class="tick"></span>
      <label for="vcb">Measurements</label>
      <input id="vcb" type="text" />
    </footer>

    <div class="taskbar">
      <button type="button" class="start" aria-label="Start"><svg viewBox="0 0 14 14"><path d="M0 2l6-.9v5.500H0zM6.700 1 14 0v6.600H6.700zM0 7.300h6v5.500L0 12zM6.700 7.300H14V14l-7.300-1z" fill="#fff" /></svg></button>
      <div class="search">
        <svg viewBox="0 0 16 16"><circle cx="9.500" cy="6" r="4.700" fill="none" stroke="#222" stroke-width="1.200" /><path d="M6 9.500 1 15" stroke="#222" stroke-width="1.200" /></svg>
        <input type="text" placeholder="Type here to search" aria-label="Search" />
      </div>
      <button v-for="a in apps" :key="a.icon" type="button" class="app" :class="{ open: a.open, active: a.active }" :aria-label="a.label">
        <svg aria-hidden="true"><use :href="'#i-' + a.icon" /></svg>
      </button>
      <button type="button" class="weather">
        <svg viewBox="0 0 22 20"><path d="M11 1 21 19H1z" fill="#fcc21b" stroke="#fcc21b" stroke-width="2" stroke-linejoin="round" /><path d="M5.500 13a3 3 0 0 1 3-3.500 3.200 3.200 0 0 1 6 1A2.200 2.200 0 0 1 15 15h-2l-1.500 3v-3H7z" fill="#3b2c0a" /></svg>
        Thunderstorm warning
      </button>
      <button type="button" class="up" aria-label="Show hidden icons"><svg viewBox="0 0 12 8"><path d="M1 7l5-5 5 5" fill="none" stroke="#fff" stroke-width="1.200" /></svg></button>
      <div class="lang"><span>ENG</span><span>SRL</span></div>
      <div class="clock"><time>12:28 PM</time><time>7/11/2026</time></div>
      <button type="button" class="notes" aria-label="Notifications">
        <svg viewBox="0 0 16 16"><path d="M1 1h14v11H7l-3 3v-3H1z" fill="#fff" /><path d="M3.500 4h9M3.500 6.500h9M3.500 9h6" stroke="#222" /></svg>
        <span class="badge">2</span>
      </button>
    </div>
  </div>
</template>

<style>
html, body { margin: 0; overflow: hidden; }
</style>

<style scoped>
.desktop, .desktop * { box-sizing: border-box; }
.desktop {
  display: flex; flex-direction: column; height: 100vh; background: #f0f0f0; color: #1a1a1a;
  font-family: "Noto Sans", "Open Sans", sans-serif; font-size: 12px;
}
button { border: 0; padding: 0; background: none; color: inherit; font: inherit; display: flex; align-items: center; justify-content: center; }
h1, h2, h3 { margin: 0; font-weight: 400; }
.sprite { position: absolute; width: 0; height: 0; overflow: visible; }

.titlebar { display: flex; align-items: center; height: 20px; flex: none; background: #fff; padding: 0 2px; }
.logo { width: 14px; height: 14px; margin-right: 5px; }
.titlebar h1 { font-size: 12px; line-height: 20px; flex: 1; }
.window-buttons { display: flex; }
.window-buttons button { width: 40px; height: 20px; }
.window-buttons svg { width: 12px; height: 12px; fill: none; stroke: #111; }

.menubar { display: flex; gap: 14px; height: 20px; flex: none; background: #fff; padding-left: 6px; }
.menubar button { line-height: 20px; }

.toolbar { flex: none; height: 34px; padding-left: 62px; display: flex; }
.strip { display: flex; align-items: center; border-left: 1px dotted #999; border-right: 1px solid #c4c4c4; padding: 0 5px 0 3px; }
.group { display: flex; }
.group + .group { border-left: 1px solid #8a8a8a; margin-left: 2px; padding-left: 4px; }
.slot { display: flex; }
.slot.pair { margin-left: 4px; }
.group + .group:last-child .pair { margin-left: 0; }
.group:nth-child(2) { padding-right: 2px; }
.tool { width: 30px; height: 30px; }
.tool svg { width: 22px; height: 22px; }
.tool.on { background: #c2dff7; box-shadow: inset 0 0 0 1px #9cc8ee; }
.caret { width: 14px; }
.caret::before { content: ""; border: 5px solid transparent; border-top-color: #000; border-bottom: 0; }

.workspace { flex: 1; min-height: 0; display: flex; }
.toolbox { flex: none; width: 60px; margin: 4px 2px 0; padding-top: 4px; border-top: 1px dotted #999; overflow: hidden; }
.box-group { display: grid; grid-template-columns: 30px 30px; }
.box-group + .box-group { border-top: 1px solid #9aa39a; margin-top: 3px; padding-top: 2px; }
.viewport { flex: 1; min-width: 0; background: #9abd91; border-top: 1px solid #6f7b72; border-left: 1px solid #6f7b72; overflow: hidden; }
.viewport svg { display: block; width: 100%; height: 100%; }

.tray { flex: none; width: 247px; margin-left: 4px; display: flex; flex-direction: column; }
.tray-head { display: flex; align-items: center; height: 23px; flex: none; margin-top: 1px; padding: 0 4px 0 5px; background: linear-gradient(#bfcddb, #d8e3f0); }
.tray-head h2 { font-size: 12px; line-height: 22px; flex: 1; }
.pin { width: 10px; margin-right: 6px; }
.pin svg { width: 9px; height: 9px; }
.tray-close { width: 10px; height: 10px; background: #c94f55; }
.tray-close svg { width: 8px; height: 8px; }
.tray-body { flex: 1; min-height: 0; display: flex; }
.panels { flex: 1; min-width: 0; display: flex; flex-direction: column; }
.panel-head {
  flex: none; display: flex; align-items: center; height: 20px; margin-top: 1px; padding: 0 2px 0 10px;
  background: linear-gradient(#e6e6e6, #b9b9b9); border-bottom: 1px solid #999; border-right: 1px solid #aaa;
}
.tri { width: 8px; height: 8px; margin-right: 7px; }
.panel-head h3 { flex: 1; font-size: 12px; line-height: 18px; }
.x { width: 14px; height: 14px; background: #e6e6e6; border: 1px solid #aaa; }
.x svg { width: 8px; height: 8px; stroke: #111; stroke-width: 1.5; }
.style-info { flex: none; display: flex; gap: 3px; height: 67px; padding: 2px 0 2px 3px; border-bottom: 1px solid #aaa; }
.thumb { width: 58px; height: 60px; border: 1px solid #999; }
.style-fields { flex: 1; display: flex; flex-direction: column; gap: 1px; }
.style-fields input, .style-fields textarea {
  width: 100%; margin: 0; border: 1px solid #9a9a9a; border-radius: 0; background: #fff; color: #111;
  padding: 0 4px; font: 10px/12px Roboto, sans-serif; resize: none; overflow: hidden;
}
.style-fields input { height: 17px; }
.style-fields textarea { height: 44px; padding: 2px 4px; }
.style-actions { width: 20px; display: flex; flex-direction: column; gap: 7px; align-items: center; padding-top: 1px; margin-left: 1px; }
.style-actions svg { width: 14px; height: 14px; }
.tabs { flex: none; display: flex; align-items: flex-end; height: 22px; font-size: 10px; }
.tabs button { height: 16px; width: 35px; padding-left: 3px; justify-content: flex-start; border: 1px solid #dcdcdc; border-bottom: 0; }
.tabs .current { height: 18px; width: 39px; padding-left: 5px; background: #fff; border-color: #fff; }
.collection { flex: none; display: flex; align-items: center; height: 27px; padding: 2px 2px 2px 10px; border-bottom: 1px solid #aaa; }
.collection button { width: 21px; height: 20px; justify-content: flex-start; }
.collection svg { width: 13px; height: 13px; }
.collection .flip { transform: scaleX(-1); }
.collection .home { width: 18px; }
.collection .home svg { width: 16px; height: 16px; }
.collection select {
  appearance: none; flex: 1; min-width: 0; height: 21px; border: 1px solid #999; border-radius: 0; padding: 0 2px; color: #111; font: 10px "Noto Sans", sans-serif;
  background: linear-gradient(#222, #222) 5px 17px / 114px 1px no-repeat,
    url("data:image/svg+xml,%3Csvg xmlns='http://www.w3.org/2000/svg' width='9' height='6'%3E%3Cpath d='M1 1l3.500 3.500L8 1' fill='none' stroke='%23444'/%3E%3C/svg%3E") right 3px center no-repeat, #fff;
}
.collection .more { width: 20px; justify-content: flex-end; }
.collection .more svg { width: 14px; height: 14px; }
.style-list { flex: 1; background: #fff; border-bottom: 1px solid #aaa; }
.style-list + .panel-head { margin-top: 3px; }
.layer-tools { flex: none; display: flex; align-items: center; height: 22px; padding: 0 2px 0 7px; gap: 7px; }
.layer-tools svg { width: 14px; height: 14px; }
.layer-tools .more { margin-left: auto; }
.layers { flex: none; width: 100%; height: 19px; border-collapse: collapse; background: #fff; table-layout: fixed; font: 10px Roboto, sans-serif; }
.layers th { font-weight: 400; text-align: left; padding: 2px 4px 0; line-height: 17px; border-right: 1px solid #ddd; }
.layers .narrow { width: 21px; }
.scroll { flex: none; width: 15px; display: flex; flex-direction: column; align-items: center; padding: 4px 0 2px; }
.scroll svg { width: 9px; height: 9px; fill: none; stroke: #444; stroke-width: 1.3; }
.thumb-bar { width: 13px; height: 15px; margin: 3px 0 auto; background: #cdcdcd; }

.status { flex: none; display: flex; align-items: center; height: 26px; padding: 0 4px 0 5px; border-top: 1px solid #dfe8dc; font-size: 11px; }
.status svg { width: 14px; height: 14px; margin-right: 12px; }
.tick { width: 1px; height: 8px; background: #aaa; margin-right: 9px; margin-left: -3px; }
.hint { flex: 1; }
.status label { margin-right: 8px; }
.status input { width: 175px; height: 21px; border: 1px solid #b4b9c9; background: #f0f0f0; border-radius: 0; }

.taskbar { flex: none; display: flex; height: 35px; background: #1d1d1d; color: #fff; }
.start { width: 42px; }
.start svg { width: 14px; height: 14px; }
.search { width: 253px; display: flex; align-items: center; padding-left: 10px; background: #f2f2f2; border: 1px solid #ccc; }
.search svg { width: 15px; height: 15px; }
.search input { flex: 1; min-width: 0; margin-left: 9px; padding: 0; border: 0; background: none; font: 12px "Noto Sans", sans-serif; }
.search input::placeholder { color: #444; opacity: 1; }
.search + .app { margin-left: 1px; }
.app { width: 43px; border-bottom: 2px solid transparent; border-top: 2px solid transparent; }
.app svg { width: 22px; height: 22px; }
.app.open { background: linear-gradient(#dceebb, #dceebb) center bottom / 34px 2px no-repeat border-box; }
.app.active { background: linear-gradient(#dceebb, #dceebb) center bottom / 40px 2px no-repeat border-box, #4a4a4a border-box; }
.weather { margin-left: auto; gap: 8px; font-size: 11px; }
.weather svg { width: 21px; height: 19px; }
.up { width: 12px; margin: 0 9px 0 22px; }
.up svg { width: 12px; height: 8px; }
.lang, .clock { display: flex; flex-direction: column; justify-content: center; font-size: 10px; line-height: 15px; text-align: center; }
.clock { margin: 0 14px 0 11px; }
.notes { position: relative; width: 20px; margin-right: 18px; }
.notes svg { width: 16px; height: 16px; }
.badge { position: absolute; left: 8px; top: 17px; width: 14px; height: 14px; border: 1px solid #999; border-radius: 50%; background: #2a2a2a; font-size: 9px; line-height: 12px; }
</style>
